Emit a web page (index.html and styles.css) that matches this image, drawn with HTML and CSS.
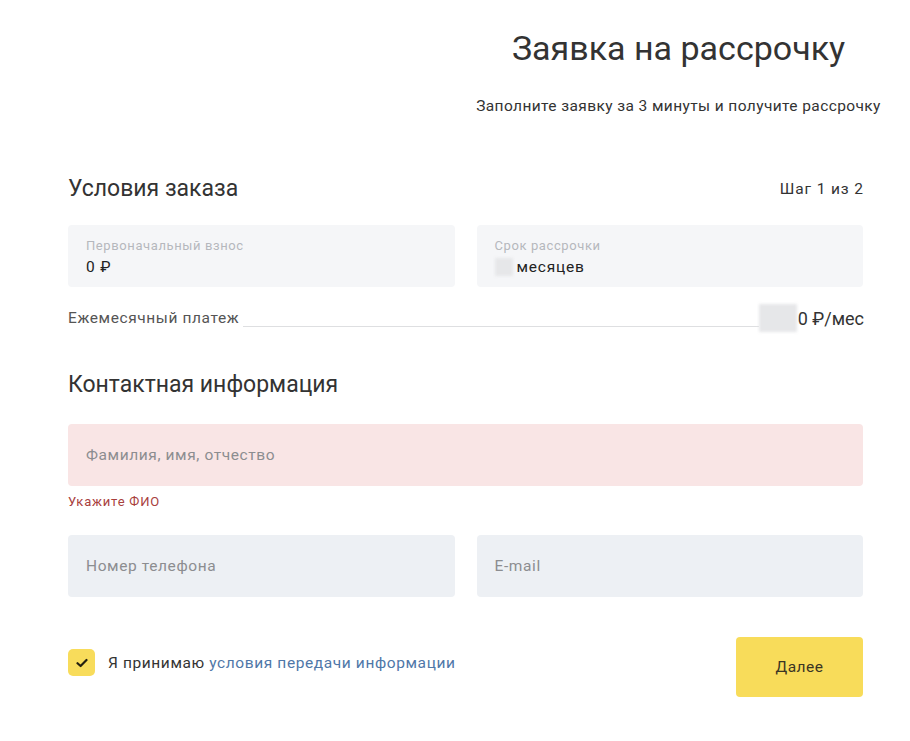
FILE: index.html
```html
<!DOCTYPE html>
<html lang="ru">
<head>
<meta charset="utf-8">
<title>Заявка на рассрочку</title>
<link rel="stylesheet" href="styles.css">
</head>
<body>
<div class="page">
  <header class="header">
    <h1 class="title">Заявка на рассрочку</h1>
    <p class="subtitle">Заполните заявку за 3 минуты и получите рассрочку</p>
  </header>

  <main class="form">
    <div class="section-head">
      <h2 class="section-title">Условия заказа</h2>
      <span class="step">Шаг 1 из 2</span>
    </div>

    <div class="row two">
      <div class="field filled">
        <span class="field-label">Первоначальный взнос</span>
        <span class="field-value">0 ₽</span>
      </div>
      <div class="field filled">
        <span class="field-label">Срок рассрочки</span>
        <span class="field-value"><span class="blur blur-small"></span>месяцев</span>
      </div>
    </div>

    <div class="payment">
      <span class="payment-label">Ежемесячный платеж</span>
      <span class="payment-line"></span>
      <span class="payment-value"><span class="blur blur-big"></span>0 ₽/мес</span>
    </div>

    <h2 class="section-title contact-title">Контактная информация</h2>

    <div class="field input error">
      <span class="placeholder">Фамилия, имя, отчество</span>
    </div>
    <div class="error-text">Укажите ФИО</div>

    <div class="row two contacts">
      <div class="field input">
        <span class="placeholder">Номер телефона</span>
      </div>
      <div class="field input">
        <span class="placeholder">E-mail</span>
      </div>
    </div>

    <div class="footer">
      <label class="agree">
        <span class="checkbox">
          <svg width="12" height="10" viewBox="0 0 12 10"><path d="M1.5 5.2 L4.6 8 L10.5 2" fill="none" stroke="#231f10" stroke-width="2.2" stroke-linecap="round" stroke-linejoin="round"/></svg>
        </span>
        <span class="agree-text">Я принимаю <a class="link" href="#">условия передачи информации</a></span>
      </label>
      <button class="next" type="button">Далее</button>
    </div>
  </main>
</div>
</body>
</html>
```

FILE: styles.css
```css
* { box-sizing: border-box; }
html, body { margin: 0; padding: 0; background: #ffffff; }
body {
  font-family: Roboto, "Liberation Sans", Arial, sans-serif;
  color: #333333;
}
.page {
  width: 910px;
  min-height: 741px;
}
.header {
  padding-top: 28px;
  padding-left: 447px;
  text-align: center;
}
.title {
  margin: 0;
  font-size: 34px;
  line-height: 40px;
  font-weight: 400;
  color: #333333;
}
.subtitle {
  margin: 28px 0 0;
  font-size: 15.5px;
  letter-spacing: 0.4px;
  line-height: 20px;
  color: #333333;
}
.form {
  margin-left: 68px;
  width: 795px;
  padding-bottom: 40px;
}
.section-head {
  margin-top: 59px;
  display: flex;
  justify-content: space-between;
  align-items: center;
}
.section-title {
  margin: 0;
  font-size: 23px;
  line-height: 28px;
  font-weight: 400;
  color: #333333;
}
.step {
  font-size: 15.5px;
  letter-spacing: 0.9px;
  color: #333333;
  margin-right: -1px;
}
.row.two {
  display: grid;
  grid-template-columns: 1fr 1fr;
  gap: 22px;
  margin-top: 22px;
}
.field {
  height: 62px;
  border-radius: 4px;
  padding: 0 18px;
  display: flex;
  flex-direction: column;
  justify-content: center;
}
.field.filled {
  background: #f5f6f8;
  gap: 4px;
  padding-top: 2px;
}
.field-label {
  font-size: 13px;
  letter-spacing: 0.6px;
  line-height: 16px;
  color: #b5b8bd;
}
.field-value {
  font-size: 15.5px;
  letter-spacing: 0.8px;
  line-height: 19px;
  color: #222222;
  display: flex;
  align-items: center;
}
.blur {
  display: inline-block;
  background: #e6e7e9;
  filter: blur(1.5px);
}
.blur-small {
  width: 18px;
  height: 18px;
  margin-right: 4px;
}
.blur-big {
  width: 38px;
  height: 28px;
  margin-right: 1px;
}
.payment {
  margin-top: 16px;
  height: 30px;
  display: flex;
  align-items: center;
}
.payment-label {
  font-size: 15.5px;
  letter-spacing: 0.6px;
  color: #555555;
  margin-right: 4px;
}
.payment-line {
  flex: 1;
  height: 1px;
  background: #dedfe1;
  align-self: flex-end;
  margin-bottom: 6px;
}
.payment-value {
  display: flex;
  align-items: center;
  font-size: 18px;
  color: #333333;
  margin-right: -1px;
}
.contact-title {
  margin-top: 38px;
}
.field.input {
  background: #edf0f4;
}
.field.error {
  margin-top: 25px;
  background: #f9e5e5;
}
.placeholder {
  font-size: 15.5px;
  letter-spacing: 0.6px;
  color: #8c8d90;
}
.error-text {
  margin-top: 8px;
  font-size: 13px;
  letter-spacing: 0.8px;
  line-height: 16px;
  color: #a8403d;
}
.row.two.contacts {
  margin-top: 25px;
}
.footer {
  margin-top: 40px;
  display: flex;
  justify-content: space-between;
  align-items: flex-start;
}
.agree {
  margin-top: 12px;
  display: flex;
  align-items: center;
  gap: 13px;
  cursor: pointer;
}
.checkbox {
  width: 27px;
  height: 27px;
  border-radius: 5px;
  background: #f8dc5b;
  display: flex;
  align-items: center;
  justify-content: center;
}
.agree-text {
  font-size: 15.5px;
  letter-spacing: 0.6px;
  color: #333333;
}
.link {
  color: #4f77a8;
  text-decoration: none;
}
.next {
  width: 127px;
  height: 60px;
  border: none;
  border-radius: 4px;
  background: #f8dc5a;
  font-family: Roboto, "Liberation Sans", Arial, sans-serif;
  font-size: 15.5px;
  letter-spacing: 0.5px;
  color: #3a3524;
  cursor: pointer;
}
```
